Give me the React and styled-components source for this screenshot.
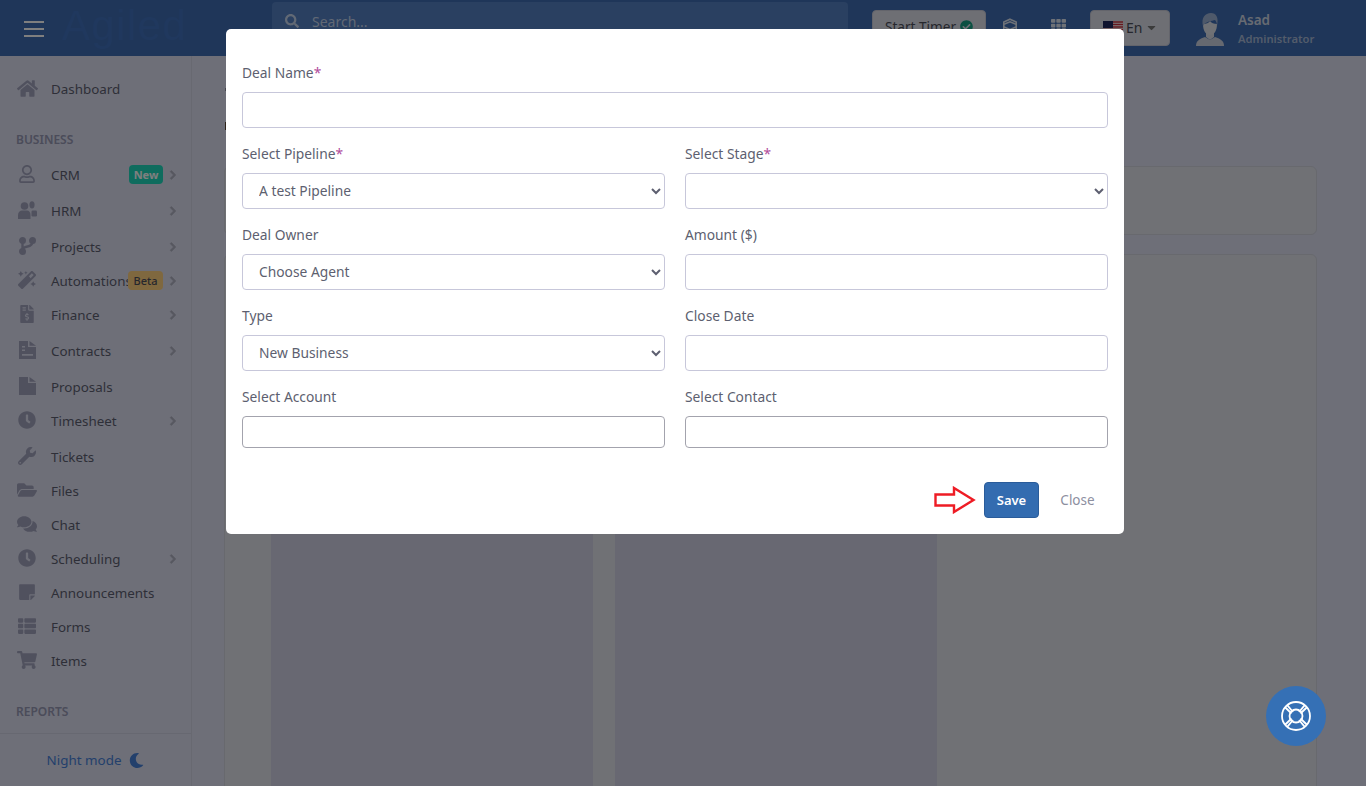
import styled, { createGlobalStyle } from "styled-components";
import {
  FaHome,
  FaRegUser,
  FaMagic,
  FaFileInvoiceDollar,
  FaClock,
  FaWrench,
  FaFolderOpen,
  FaComments,
  FaStickyNote,
  FaThList,
  FaShoppingCart,
  FaMoon,
  FaChevronRight,
  FaSearch,
  FaTh,
  FaCheckCircle,
  FaCaretDown,
} from "react-icons/fa";

const FONT = `"Noto Sans", "Open Sans", sans-serif`;

const GlobalStyle = createGlobalStyle`
  html, body {
    margin: 0;
    height: 100%;
    overflow: hidden;
  }
  body {
    font-family: ${FONT};
    font-size: 14px;
    background: #dcdef0;
  }
  * {
    box-sizing: border-box;
  }
`;

// the few menu glyphs that the icon packages draw differently
const HrmIcon = () => (
  <svg width="19" height="18" viewBox="0 0 19 18" fill="currentColor">
    <circle cx="6.500" cy="5" r="3.800" />
    <path d="M0 18v-4c0-3 2-4.500 4-4.500h5c2 0 3.500 1.500 3.500 4.500v4z" />
    <ellipse cx="14" cy="3.800" rx="2.600" ry="3.600" />
    <rect x="13.500" y="9.500" width="5.500" height="6" rx="1.200" />
  </svg>
);

const BranchIcon = () => (
  <svg width="17" height="18" viewBox="0 0 17 18" fill="none" stroke="currentColor" strokeWidth="2.400">
    <circle cx="3.500" cy="3.500" r="2.300" fill="currentColor" />
    <circle cx="13.500" cy="3.500" r="2.300" fill="currentColor" />
    <circle cx="3.500" cy="14.500" r="2.300" fill="currentColor" />
    <path d="M3.500 4v10M13.500 4c0 4-2 5-5 5.500s-5 1-5 3.500" />
  </svg>
);

const ContractIcon = () => (
  <svg width="17" height="18" viewBox="0 0 17 18" fill="currentColor">
    <path d="M0 0h9v6h8v12H0zM10.500 0 17 4.800h-6.500z" />
    <path d="M3 5h3v1.500H3zM3 8.500h3V10H3zM3 13h11v1.700H3z" fill="#dcdef0" />
  </svg>
);

const PlainFileIcon = () => (
  <svg width="17" height="18" viewBox="0 0 17 18" fill="currentColor">
    <path d="M0 0h9v6h8v12H0zM10.500 0 17 4.800h-6.500z" />
  </svg>
);

const menu = [
  { label: "Dashboard", icon: <FaHome size={21} /> },
  { section: "BUSINESS" },
  { label: "CRM", icon: <FaRegUser size={18} />, arrow: true, badge: "New" },
  { label: "HRM", icon: <HrmIcon />, arrow: true, tall: true },
  { label: "Projects", icon: <BranchIcon />, arrow: true, tall: true },
  { label: "Automations", icon: <FaMagic size={18} />, arrow: true, badge: "Beta" },
  { label: "Finance", icon: <FaFileInvoiceDollar size={18} />, arrow: true },
  { label: "Contracts", icon: <ContractIcon />, arrow: true, tall: true },
  { label: "Proposals", icon: <PlainFileIcon />, tall: true },
  { label: "Timesheet", icon: <FaClock size={18} />, arrow: true },
  { label: "Tickets", icon: <FaWrench size={18} />, tall: true },
  { label: "Files", icon: <FaFolderOpen size={20} /> },
  { label: "Chat", icon: <FaComments size={20} /> },
  { label: "Scheduling", icon: <FaClock size={18} />, arrow: true },
  { label: "Announcements", icon: <FaStickyNote size={18} /> },
  { label: "Forms", icon: <FaThList size={18} /> },
  { label: "Items", icon: <FaShoppingCart size={20} /> },
  { section: "REPORTS" },
];

function App() {
  return (
    <>
      <GlobalStyle />
      <Page>
        <Header>
          <MenuButton>
            <span />
            <span />
            <span />
          </MenuButton>
          <Logo>Agiled</Logo>
          <SearchBar>
            <FaSearch size={14} />
            Search...
          </SearchBar>
          <TimerButton>
            Start Timer <FaCheckCircle size={13} color="#17a085" />
          </TimerButton>
          <HeaderIcon>
            <svg width="16" height="16" viewBox="0 0 16 16" fill="none" stroke="currentColor" strokeWidth="1.600">
              <path d="M8 1.200 14.200 4v7.600L8 14.800 1.800 11.600V4z" />
              <path d="M2 6.200 8 3.800l6 2.400M2 9l6 2.400L14 9" />
            </svg>
          </HeaderIcon>
          <HeaderIcon>
            <FaTh size={15} />
          </HeaderIcon>
          <LangButton>
            <svg width="20" height="12" viewBox="0 0 20 12">
              <rect width="20" height="12" fill="#fff" />
              <path d="M0 1h20M0 3.500h20M0 6h20M0 8.500h20M0 11h20" stroke="#c8313e" strokeWidth="1.300" />
              <rect width="10" height="7" fill="#20295e" />
            </svg>
            En
            <FaCaretDown size={13} />
          </LangButton>
          <Avatar>
            <svg width="28" height="33" viewBox="0 0 28 33">
              <path d="M0 33c0-5 3-7 9-9l5 3 5-3c6 2 9 4 9 9z" fill="#cdd3e0" />
              <path d="M10 20h8v4l-4 3-4-3z" fill="#d8dce6" />
              <path d="M7 11c0 7 3 11 7 11s7-4 7-11c-3 0-6-1-7-3-1 2-4 3-7 3z" fill="#dfe2ea" />
              <path d="M7 13C5 5 9 0 15 0c5 0 8 4 6 13 0-3-1-5-2-6-3 1-9 1-12 6z" fill="#9db2d4" />
            </svg>
            <AvatarText>
              <strong>Asad</strong>
              <small>Administrator</small>
            </AvatarText>
          </Avatar>
        </Header>

        <Body>
          <Sidebar>
            <MenuList>
              {menu.map((item) =>
                item.section ? (
                  <SectionTitle key={item.section}>{item.section}</SectionTitle>
                ) : (
                  <MenuRow key={item.label} $tall={item.tall}>
                    <MenuIcon>{item.icon}</MenuIcon>
                    <MenuLabel>{item.label}</MenuLabel>
                    {item.badge && <Badge $kind={item.badge}>{item.badge}</Badge>}
                    {item.arrow && (
                      <Arrow>
                        <FaChevronRight size={10} />
                      </Arrow>
                    )}
                  </MenuRow>
                )
              )}
            </MenuList>
            <NightMode>
              Night mode <FaMoon size={15} />
            </NightMode>
          </Sidebar>

          <Main>
            {/* only a sliver of the page heading shows beside the dialog */}
            <HeadingSliver $top={32} $height={3} $color="#8a8c9c" />
            <HeadingSliver $top={31} $height={8} $color="#5a4632" />
            <FilterCard />
            <BoardCard>
              <Column />
              <Column />
            </BoardCard>
          </Main>
        </Body>

        <Overlay>
          <Modal>
            <Field>
              <Label>
                Deal Name<Req>*</Req>
              </Label>
              <Input type="text" />
            </Field>
            <TwoCols>
              <Field>
                <Label>
                  Select Pipeline<Req>*</Req>
                </Label>
                <Select defaultValue="A test Pipeline">
                  <option>A test Pipeline</option>
                </Select>
              </Field>
              <Field>
                <Label>
                  Select Stage<Req>*</Req>
                </Label>
                <Select defaultValue="">
                  <option value=""></option>
                </Select>
              </Field>
              <Field>
                <Label>Deal Owner</Label>
                <Select defaultValue="Choose Agent">
                  <option>Choose Agent</option>
                </Select>
              </Field>
              <Field>
                <Label>Amount ($)</Label>
                <Input type="text" />
              </Field>
              <Field>
                <Label>Type</Label>
                <Select defaultValue="New Business">
                  <option>New Business</option>
                </Select>
              </Field>
              <Field>
                <Label>Close Date</Label>
                <Input type="text" />
              </Field>
              <Field>
                <Label>Select Account</Label>
                <SearchInput type="text" />
              </Field>
              <Field>
                <Label>Select Contact</Label>
                <SearchInput type="text" />
              </Field>
            </TwoCols>
            <Footer>
              <svg width="42" height="28" viewBox="0 0 42 28">
                <path d="M1.500 8.500H20V2l19.500 12L20 26v-6.500H1.500z" fill="#fff" stroke="#ee1c25" strokeWidth="2.400" />
              </svg>
              <SaveButton>Save</SaveButton>
              <CloseButton>Close</CloseButton>
            </Footer>
          </Modal>
          <HelpButton>
            <svg width="32" height="32" viewBox="0 0 32 32" fill="none" stroke="currentColor" strokeWidth="1.800">
              <circle cx="16" cy="16" r="14" />
              <circle cx="16" cy="16" r="6.500" />
              <path d="M7 4.800 13 12M4.800 7 11.500 13.500M25 4.800 19 12M27.200 7 20.500 13.500M7 27.200 13 20M4.800 25 11.500 18.500M25 27.200 19 20M27.200 25 20.500 18.500" />
            </svg>
          </HelpButton>
        </Overlay>
      </Page>
    </>
  );
}

export default App;

const Page = styled.div`
  display: flex;
  flex-direction: column;
  height: 786px;
  overflow: hidden;
`;

const Header = styled.header`
  display: flex;
  align-items: flex-start;
  height: 56px;
  flex: none;
  background: #3e6cb2;
  color: #fff;
`;

const MenuButton = styled.div`
  display: flex;
  flex-direction: column;
  gap: 5px;
  width: 20px;
  margin: 21px 0 0 24px;
  span {
    height: 2px;
    background: #fff;
  }
`;

const Logo = styled.div`
  width: 127px;
  margin-left: 18px;
  padding-top: 2px;
  font-family: "Liberation Sans", sans-serif;
  font-size: 42px;
  letter-spacing: 1.400px;
  line-height: 48px;
  color: #4071bc;
`;

const SearchBar = styled.div`
  display: flex;
  align-items: center;
  gap: 13px;
  width: 576px;
  height: 38px;
  margin: 2px 24px 0 83px;
  padding-left: 13px;
  border-radius: 4px;
  background: #5580c2;
  color: #c3d2ea;
  font-size: 14px;
`;

const TimerButton = styled.div`
  display: flex;
  align-items: center;
  gap: 4px;
  width: 114px;
  height: 36px;
  margin-top: 10px;
  padding: 0 0 4px 12px;
  border-radius: 4px;
  background: #dcdee8;
  border: 1px solid #c6c9d6;
  color: #4c4e5a;
  font-size: 13.600px;
  white-space: nowrap;
`;

const HeaderIcon = styled.div`
  display: flex;
  justify-content: center;
  width: 48px;
  margin-top: 18px;
  color: #dde4f0;
`;

const LangButton = styled.div`
  display: flex;
  align-items: center;
  gap: 3px;
  width: 80px;
  height: 36px;
  margin-left: 8px;
  margin-top: 10px;
  padding: 0 0 2px 12px;
  border-radius: 4px;
  background: #dcdee8;
  border: 1px solid #c6c9d6;
  color: #4c4e5a;
  font-size: 14px;
  svg:last-child {
    color: #777;
  }
`;

const Avatar = styled.div`
  display: flex;
  align-items: center;
  gap: 14px;
  margin: 11px 0 0 26px;
`;

const AvatarText = styled.div`
  display: flex;
  flex-direction: column;
  gap: 2px;
  color: #cfd6e4;
  strong {
    font-weight: 600;
    font-size: 13.500px;
    line-height: 18px;
  }
  small {
    font-weight: 600;
    font-size: 11.200px;
    line-height: 16px;
    color: #a6b8d6;
  }
`;

const Body = styled.div`
  display: flex;
  flex: 1;
  min-height: 0;
`;

const Sidebar = styled.aside`
  display: flex;
  flex-direction: column;
  width: 192px;
  flex: none;
  border-right: 1px solid #d0d2e2;
`;

const MenuList = styled.nav`
  flex: 1;
  padding-top: 15px;
  overflow: hidden;
`;

const MenuRow = styled.div`
  display: flex;
  align-items: center;
  position: relative;
  height: 34px;
  margin-top: ${(p) => (p.$tall ? "2px" : "0")};
  padding-left: 16px;
  color: #5d5f70;
`;

const MenuIcon = styled.span`
  display: flex;
  justify-content: center;
  width: 22px;
  margin-right: 13px;
  color: #a1a3bd;
`;

const MenuLabel = styled.span`
  padding-top: 2px;
  font-size: 13.400px;
  white-space: nowrap;
`;

const Badge = styled.span`
  position: absolute;
  left: ${(p) => (p.$kind === "New" ? "129px" : "128px")};
  width: ${(p) => (p.$kind === "New" ? "34px" : "35px")};
  height: 19px;
  border-radius: 4px;
  text-align: center;
  font-size: 11px;
  font-weight: ${(p) => (p.$kind === "New" ? 700 : 500)};
  line-height: 19px;
  background: ${(p) => (p.$kind === "New" ? "#1ed8bd" : "#ffd07e")};
  color: ${(p) => (p.$kind === "New" ? "#fff" : "#4c4e5a")};
`;

const Arrow = styled.span`
  position: absolute;
  left: 168px;
  top: 13px;
  display: flex;
  color: #aeb0c0;
  svg path {
    stroke: currentColor;
    stroke-width: 40;
  }
`;

const SectionTitle = styled.div`
  height: 35px;
  margin-top: 17px;
  padding-left: 16px;
  font-size: 12px;
  font-weight: 600;
  line-height: 36px;
  color: #9698b4;
  & + div {
    margin-top: 0;
  }
`;

const NightMode = styled.div`
  display: flex;
  align-items: center;
  justify-content: center;
  gap: 8px;
  height: 53px;
  flex: none;
  border-top: 1px solid #cfd1e2;
  color: #4680d8;
  font-size: 13.400px;
`;

const Main = styled.main`
  flex: 1;
  min-width: 0;
  padding: 0 49px 0 32px;
`;

const HeadingSliver = styled.div`
  width: 2px;
  height: ${(p) => p.$height}px;
  margin: ${(p) => p.$top}px 0 0 1px;
  background: ${(p) => p.$color};
`;

const FilterCard = styled.div`
  height: 69px;
  margin-top: 36px;
  border: 1px solid #d0d2dc;
  border-radius: 6px;
  background: #e1e3eb;
`;

const BoardCard = styled.div`
  display: flex;
  gap: 22px;
  height: 560px;
  margin-top: 19px;
  padding: 0 0 0 46px;
  border: 1px solid #d0d2dc;
  border-radius: 6px;
  background: #e1e3eb;
`;

const Column = styled.div`
  width: 322px;
  background: #d1d1e4;
`;

const Overlay = styled.div`
  position: fixed;
  inset: 0;
  display: flex;
  justify-content: center;
  align-items: flex-start;
  padding: 29px 16px 0 0;
  background: rgba(0, 0, 0, 0.5);
`;

const Modal = styled.div`
  width: 898px;
  height: 505px;
  padding: 34px 16px 0;
  border-radius: 5px;
  background: #fff;
`;

const Field = styled.div`
  display: flex;
  flex-direction: column;
  height: 81px;
`;

const TwoCols = styled.div`
  display: grid;
  grid-template-columns: 1fr 1fr;
  column-gap: 20px;
`;

const Label = styled.label`
  height: 29px;
  font-size: 13.800px;
  line-height: 20px;
  color: #5d5f70;
`;

const Req = styled.span`
  color: #b14c9c;
`;

const Input = styled.input`
  width: 100%;
  height: 36px;
  border: 1px solid #c7c7da;
  border-radius: 4px;
  outline: none;
  background: #fff;
`;

const SearchInput = styled(Input)`
  height: 32px;
  border-color: #a3a3ad;
`;

const Select = styled.select`
  width: 100%;
  height: 36px;
  padding: 0 8px 2px 12px;
  border: 1px solid #c7c7da;
  border-radius: 4px;
  outline: none;
  background: #fff;
  color: #5d5f70;
  font-family: ${FONT};
  font-size: 13.800px;
`;

const Footer = styled.div`
  display: flex;
  align-items: center;
  justify-content: flex-end;
  margin-top: 14px;
  svg {
    margin-right: 8px;
  }
`;

const SaveButton = styled.button`
  width: 55px;
  height: 36px;
  padding: 0;
  border: 1px solid #2a5c9a;
  border-radius: 4px;
  background: #336cb0;
  color: #fff;
  font-family: ${FONT};
  font-size: 13px;
  font-weight: 600;
`;

const CloseButton = styled.button`
  width: 69px;
  height: 36px;
  padding: 0 0 0 8px;
  border: none;
  background: none;
  color: #8d8f9f;
  font-family: ${FONT};
  font-size: 13.500px;
`;

const HelpButton = styled.div`
  position: absolute;
  left: 1266px;
  top: 686px;
  display: flex;
  align-items: center;
  justify-content: center;
  width: 60px;
  height: 60px;
  border-radius: 50%;
  background: #3570b5;
  color: #fff;
`;
